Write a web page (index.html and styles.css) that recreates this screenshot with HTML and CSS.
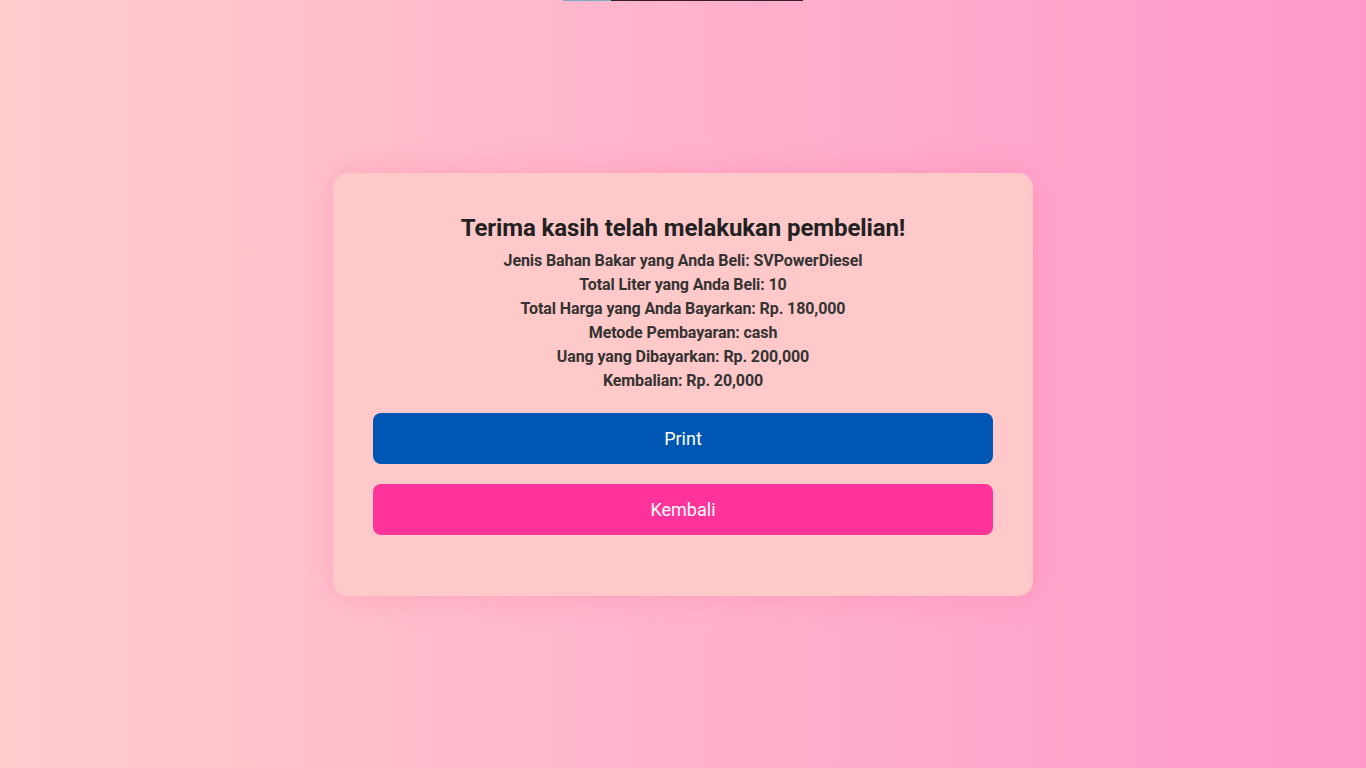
FILE: index.html
```html
<!DOCTYPE html>
<html lang="id">
<head>
<meta charset="utf-8">
<title>Terima kasih</title>
<link rel="stylesheet" href="styles.css">
</head>
<body>
<div class="topline"><span class="seg-a"></span><span class="seg-b"></span></div>
<main class="card">
  <h2 class="title">Terima kasih telah melakukan pembelian!</h2>
  <div class="details">
    <p>Jenis Bahan Bakar yang Anda Beli: SVPowerDiesel</p>
    <p>Total Liter yang Anda Beli: 10</p>
    <p>Total Harga yang Anda Bayarkan: Rp. 180,000</p>
    <p>Metode Pembayaran: cash</p>
    <p>Uang yang Dibayarkan: Rp. 200,000</p>
    <p>Kembalian: Rp. 20,000</p>
  </div>
  <button class="btn btn-print">Print</button>
  <button class="btn btn-back">Kembali</button>
</main>
</body>
</html>
```
FILE: styles.css
```css
html, body {
  margin: 0;
  height: 100%;
}
body {
  font-family: Roboto, "Liberation Sans", sans-serif;
  background: linear-gradient(to right, #ffcccc, #ff99cc);
  display: flex;
  align-items: center;
  justify-content: center;
  color: #333;
}
.topline {
  position: absolute;
  top: 0;
  left: 563px;
  display: flex;
  height: 1px;
}
.seg-a { width: 48px; background: #7aaec0; }
.seg-b { width: 192px; background: #3a1a26; }
.card {
  box-sizing: border-box;
  width: 700px;
  padding: 40px 40px 41px;
  background: #ffc8c9;
  border-radius: 15px;
  box-shadow: 0 0 30px rgba(255, 105, 150, 0.3);
  text-align: center;
}
.title {
  margin: 0 0 6px;
  font-size: 24px;
  line-height: 30px;
  font-weight: 700;
  color: #222;
  letter-spacing: -0.1px;
}
.details p {
  margin: 0;
  font-size: 16px;
  line-height: 24px;
  font-weight: 700;
  color: #333;
  letter-spacing: -0.1px;
}
.details {
  margin-bottom: 20px;
}
.btn {
  display: block;
  width: 100%;
  height: 51px;
  border: none;
  border-radius: 8px;
  color: #fff;
  font-family: Roboto, "Liberation Sans", sans-serif;
  font-size: 18px;
  margin-bottom: 20px;
  cursor: pointer;
}
.btn-print { background: #0056b3; }
.btn-back { background: #ff3399; }
```
